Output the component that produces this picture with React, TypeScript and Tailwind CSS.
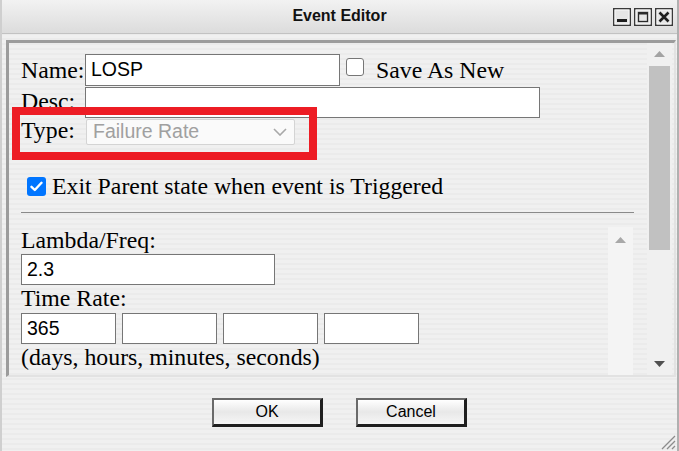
import React from "react";

function Tri({ up, color }: { up?: boolean; color: string }) {
  return (
    <svg width="11" height="6" viewBox="0 0 11 6">
      {up ? <path d="M0 6 L5.5 0 L11 6 Z" fill={color} /> : <path d="M0 0 L5.5 6 L11 0 Z" fill={color} />}
    </svg>
  );
}

function WinBtn({ kind }: { kind: "min" | "max" | "close" }) {
  return (
    <svg width="18" height="18" viewBox="0 0 18 18">
      <rect x="0.75" y="0.75" width="16.5" height="16.5" fill="#e6e6e6" stroke="#3a3a3a" strokeWidth="1.5" />
      <rect x="2" y="2" width="14" height="14" fill="none" stroke="#f8f8f8" strokeWidth="1" />
      {kind === "min" && <rect x="4" y="11" width="10" height="3" fill="#1e1e1e" />}
      {kind === "max" && (
        <>
          <rect x="4.5" y="4.5" width="9" height="9" fill="none" stroke="#2a2a2a" strokeWidth="1.3" />
          <rect x="4" y="4" width="10" height="2.5" fill="#2a2a2a" />
        </>
      )}
      {kind === "close" && (
        <path d="M4.5 4.5 L13.5 13.5 M13.5 4.5 L4.5 13.5" stroke="#1e1e1e" strokeWidth="2.6" />
      )}
    </svg>
  );
}

function TextBox({ w, h, value }: { w: string; h: string; value?: string }) {
  return (
    <div
      className={`${w} ${h} shrink-0 border border-[#767676] bg-white flex items-center pl-[5px] font-['Liberation_Sans',Arial,sans-serif] text-[19.5px] leading-none text-black`}
    >
      {value}
    </div>
  );
}

function DialogButton({ label }: { label: string }) {
  return (
    <div className="w-[111px] h-[29px] border-t-2 border-l-2 border-t-[#6a6a6a] border-l-[#6a6a6a] border-r-[3px] border-b-[3px] border-r-[#1f1f1f] border-b-[#1f1f1f] bg-gradient-to-b from-white via-[#e8e8e8] to-[#f6f6f6] flex items-center justify-center font-['Liberation_Sans',Arial,sans-serif] text-[16px] text-black">
      {label}
    </div>
  );
}

export default function App() {
  return (
    <div className="w-[679px] h-[451px] overflow-hidden relative flex flex-col border-l-2 border-l-[#cfcfcf] border-r-2 border-r-[#b0b0b0] bg-[repeating-linear-gradient(180deg,#f0f0f0_0px,#f0f0f0_3px,#ebebeb_3px,#ebebeb_5px)] font-['Liberation_Serif','Times_New_Roman',serif] text-black">
      {/* Title bar */}
      <div className="h-[34px] shrink-0 grid grid-cols-[1fr_auto_1fr] items-center bg-gradient-to-b from-[#f2f2f2] to-[#dcdcdc] border-b border-[#c2c2c2]">
        <div />
        <div className="font-['Liberation_Sans',Arial,sans-serif] font-bold text-[16px] text-[#111] pb-[1px]">Event Editor</div>
        <div className="flex justify-end gap-[3px] pr-[4px]">
          <WinBtn kind="min" />
          <WinBtn kind="max" />
          <WinBtn kind="close" />
        </div>
      </div>

      {/* Panel */}
      <div className="mt-[6px] ml-[4px] mr-[1px] h-[337px] shrink-0 flex border-t-[3px] border-l-[3px] border-t-[#9c9c9c] border-l-[#9c9c9c] border-r-2 border-b-2 border-r-[#e2e2e2] border-b-[#e2e2e2]">
        {/* Content */}
        <div className="flex-1 min-w-0 overflow-hidden pl-[12px] pr-[13px] pt-[11px] flex flex-col">
          {/* Name */}
          <div className="flex items-center h-[32px] shrink-0">
            <span className="w-[64px] text-[23.8px] leading-[27px]">Name:</span>
            <TextBox w="w-[255px]" h="h-[32px]" value="LOSP" />
            <span className="ml-[6px] w-[18px] h-[18px] rounded-[3px] border border-[#767676] bg-white self-start mt-[4px]" />
            <span className="ml-[12px] text-[23.8px] leading-[27px]">Save As New</span>
          </div>
          {/* Desc */}
          <div className="flex items-center h-[31px] mt-[1px] shrink-0">
            <span className="w-[64px] text-[23.8px] leading-[27px] mb-[3px]">Desc:</span>
            <TextBox w="w-[455px]" h="h-[31px]" />
          </div>
          {/* Type */}
          <div className="flex items-center h-[26px] mt-[1px] shrink-0">
            <span className="w-[64px] text-[23.8px] leading-[27px] mb-[3px]">Type:</span>
            <div className="ml-[1px] w-[209px] h-[26px] border border-[#d4d4d4] rounded-[2px] bg-[#fafafa] flex items-center justify-between pl-[6px] pr-[7px] font-['Liberation_Sans',Arial,sans-serif] text-[19.5px] leading-none text-[#a0a0a0]">
              <span>Failure Rate</span>
              <svg width="14" height="8" viewBox="0 0 14 8">
                <path d="M1 1 L7 7 L13 1" fill="none" stroke="#a8a8a8" strokeWidth="1.6" />
              </svg>
            </div>
          </div>
          {/* Exit parent */}
          <div className="flex items-center h-[27px] mt-[28px] shrink-0">
            <span className="ml-[6px] w-[19px] h-[19px] rounded-[3px] bg-[#0075ff] flex items-center justify-center">
              <svg width="13" height="11" viewBox="0 0 13 11">
                <path d="M1.5 5.8 L4.8 9 L11.5 1.8" fill="none" stroke="white" strokeWidth="2.4" strokeLinecap="round" strokeLinejoin="round" />
              </svg>
            </span>
            <span className="ml-[6px] text-[23.8px] leading-[27px] whitespace-nowrap">Exit Parent state when event is Triggered</span>
          </div>
          {/* Rule */}
          <div className="mt-[12px] h-px bg-[#8a8a8a] shrink-0" />
          {/* Inner scroll region */}
          <div className="mt-[14px] h-[220px] shrink-0 flex">
            <div className="flex-1 min-w-0 flex flex-col">
              <div className="text-[23.8px] leading-[27px]">Lambda/Freq:</div>
              <TextBox w="w-[254px]" h="h-[31px]" value="2.3" />
              <div className="text-[23.8px] leading-[27px]">Time Rate:</div>
              <div className="flex gap-[6px] mt-[1px]">
                <TextBox w="w-[95px]" h="h-[31px]" value="365" />
                <TextBox w="w-[95px]" h="h-[31px]" />
                <TextBox w="w-[95px]" h="h-[31px]" />
                <TextBox w="w-[95px]" h="h-[31px]" />
              </div>
              <div className="text-[23.8px] leading-[27px] whitespace-nowrap">(days, hours, minutes, seconds)</div>
            </div>
            <div className="w-[25px] mr-[1px] bg-[#f4f4f4] flex flex-col items-center pt-[10px]">
              <Tri up color="#a8a8a8" />
            </div>
          </div>
        </div>
        {/* Outer scrollbar */}
        <div className="w-[25px] mr-[2px] bg-[#f0f0f0] flex flex-col items-center">
          <div className="h-[21px] w-full flex items-center justify-center">
            <Tri up color="#a3a3a3" />
          </div>
          <div className="mt-[2px] w-[21px] h-[184px] bg-[#c1c1c1]" />
          <div className="flex-1" />
          <div className="h-[20px] w-full flex items-center justify-center mb-[1px]">
            <Tri color="#505050" />
          </div>
        </div>
      </div>

      {/* Buttons */}
      <div className="mt-[21px] flex justify-center gap-[33px]">
        <DialogButton label="OK" />
        <DialogButton label="Cancel" />
      </div>

      {/* Resize grip */}
      <svg className="absolute right-[1px] bottom-[1px]" width="17" height="17" viewBox="0 0 17 17">
        <path d="M16 3 L3 16 M16 8 L8 16 M16 13 L13 16" stroke="#8c8c8c" strokeWidth="1.3" />
      </svg>

      {/* Red annotation box */}
      <div className="absolute left-[10px] top-[107px] w-[305px] h-[53px] border-[8px] border-[#ed1c24] pointer-events-none" />
    </div>
  );
}
